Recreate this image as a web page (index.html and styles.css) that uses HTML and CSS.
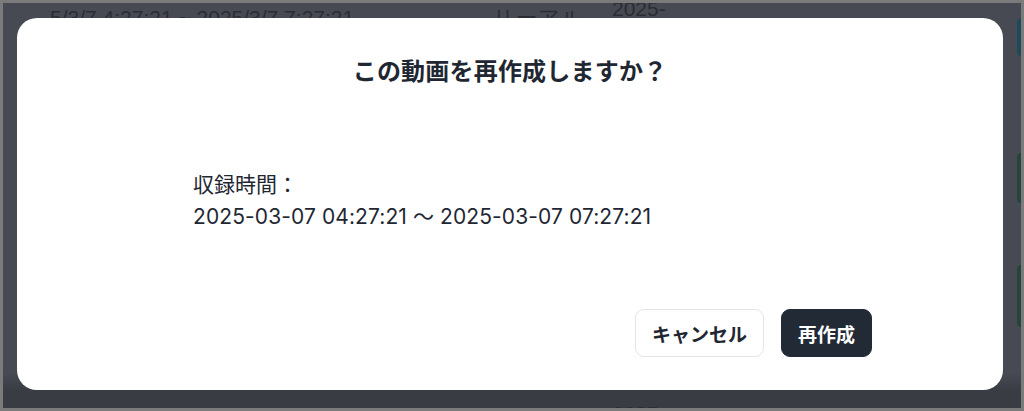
FILE: index.html
```html
<!DOCTYPE html>
<html lang="ja">
<head>
<meta charset="utf-8">
<title>再作成</title>
<link rel="stylesheet" href="styles.css">
</head>
<body>
<div class="frame">
  <div class="screen">
    <div class="under">
      <span class="u-range">5/3/7 4:27:21 ~ 2025/3/7 7:27:21</span>
      <span class="u-kind">リーアル</span>
      <span class="u-date">2025-</span>
    </div>
    <div class="under-bottom"><span class="u-date2">2025</span></div>
    <div class="side-pill teal"></div>
    <div class="side-pill green1"></div>
    <div class="side-pill green2"></div>

    <div class="dialog" role="dialog">
      <h2 class="title">この動画を再作成しますか？</h2>
      <div class="body">
        <p class="label">収録時間：</p>
        <p class="range">2025-03-07 04:27:21 〜 2025-03-07 07:27:21</p>
      </div>
      <div class="footer">
        <button class="btn btn-outline">キャンセル</button>
        <button class="btn btn-dark">再作成</button>
      </div>
    </div>
  </div>
</div>
</body>
</html>
```
FILE: styles.css
```css
* { box-sizing: border-box; }
html, body { margin: 0; padding: 0; }
body {
  width: 1024px;
  height: 411px;
  overflow: hidden;
  background: #7b7b7b;
  font-family: Inter, "Noto Sans CJK JP", sans-serif;
}
.frame {
  padding: 3px;
  height: 411px;
}
.screen {
  position: relative;
  height: 405px;
  background: linear-gradient(#474a52 0, #474a52 370px, #393c43 388px, #393c43 100%);
  overflow: hidden;
}
.under {
  position: absolute;
  left: 0; top: 0; right: 0;
  height: 20px;
  color: #2a2d33;
  font-family: "Liberation Sans", sans-serif;
  font-size: 21px;
  line-height: 24px;
}
.u-range { position: absolute; left: 47px; top: 3px; }
.u-kind { position: absolute; left: 490px; top: 3px; letter-spacing: 1px; }
.u-date { position: absolute; left: 609px; top: -6px; }
.under-bottom {
  position: absolute;
  left: 0; right: 0; bottom: 0; height: 6px;
  overflow: hidden;
}
.u-date2 {
  position: absolute; left: 609px; top: 0;
  color: #2a2d33; font-family: "Liberation Sans", sans-serif; font-size: 21px; line-height: 24px;
}
.side-pill {
  position: absolute;
  right: 0;
  width: 4px;
  border-radius: 4px 0 0 4px;
}
.teal { top: 15px; height: 38px; background: #1f4a5a; }
.green1 { top: 150px; height: 50px; background: #24463a; }
.green2 { top: 262px; height: 62px; background: #24463a; }

.dialog {
  position: absolute;
  left: 14px;
  top: 15px;
  width: 986px;
  height: 372px;
  background: #ffffff;
  border-radius: 20px;
  display: flex;
  flex-direction: column;
  color: #1f2733;
}
.title {
  margin: 0;
  padding-top: 39px;
  text-align: center;
  font-size: 24px;
  line-height: 30px;
  font-weight: 700;
  letter-spacing: 0.2px;
}
.body {
  padding: 0 131px 0 176px;
  margin-top: 82px;
  font-size: 21px;
  line-height: 32px;
}
.body p { margin: 0; }
.range { letter-spacing: 0.1px; }
.footer {
  margin-top: auto;
  padding: 0 131px 33px 0;
  display: flex;
  justify-content: flex-end;
  gap: 17px;
}
.btn {
  font-family: Inter, "Noto Sans CJK JP", sans-serif;
  font-size: 19px;
  font-weight: 700;
  height: 48px;
  padding: 0 16px;
  border-radius: 9px;
  cursor: pointer;
}
.btn-outline {
  background: #fff;
  color: #1f2733;
  border: 1px solid #e2e6ea;
}
.btn-dark {
  background: #212a35;
  color: #fff;
  border: 1px solid #212a35;
}
```
